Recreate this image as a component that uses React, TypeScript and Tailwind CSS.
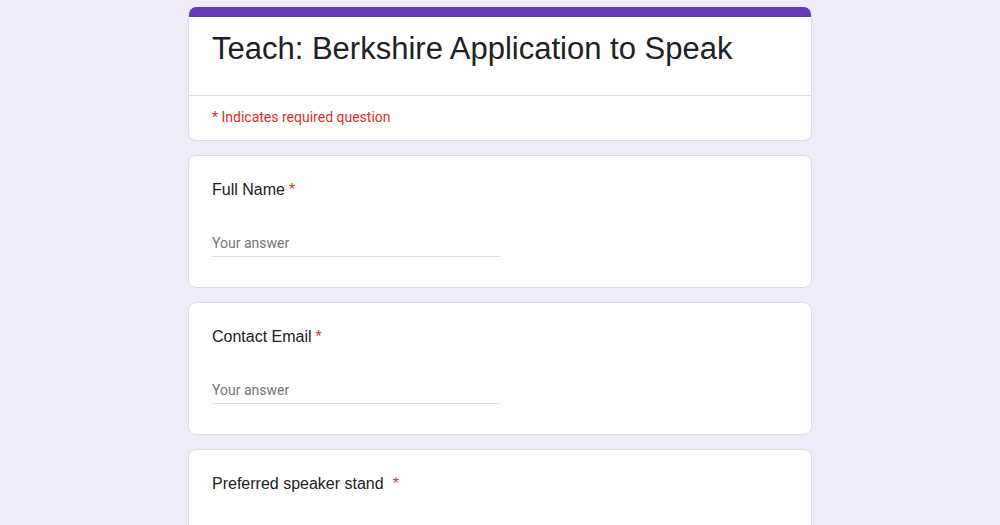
import React from 'react';

const Question = ({ label, gap = 'ml-1', input = true }: { label: string; gap?: string; input?: boolean }) => (
  <div className="bg-white border border-[#dadce0] rounded-lg px-[23px] pt-[22px] pb-[30px]">
    <div className="text-base leading-6 text-[#202124] font-['Liberation_Sans',Arial,sans-serif]">
      {label}
      <span className={`${gap} text-[#d93025]`}>*</span>
    </div>
    {input && (
      <div className="mt-[28px] w-[288px] border-b border-[#e0e0e0] pb-[2px]">
        <span className="text-sm leading-5 text-[#70757a] font-['Roboto',sans-serif]">Your answer</span>
      </div>
    )}
  </div>
);

export default function App() {
  return (
    <div className="h-screen overflow-hidden bg-[#f0ebf8] pt-[7px]">
      <div className="w-[624px] mx-auto flex flex-col gap-[14px]">
        <div className="bg-white border border-[#dadce0] border-t-0 rounded-lg overflow-hidden">
          <div className="h-[10px] bg-[#673ab7]" />
          <div className="px-[23px] pt-3 pb-[26px]">
            <h1 className="text-[31px] leading-10 text-[#202124] font-['Liberation_Sans',Arial,sans-serif]">
              Teach: Berkshire Application to Speak
            </h1>
          </div>
          <div className="border-t border-[#e0e0e0] px-[23px] pt-[11px] pb-[13px]">
            <p className="text-sm leading-5 text-[#d93025] font-['Roboto',sans-serif]">* Indicates required question</p>
          </div>
        </div>
        <Question label="Full Name" />
        <Question label="Contact Email" />
        <Question label="Preferred speaker stand" gap="ml-[9px]" />
      </div>
    </div>
  );
}
